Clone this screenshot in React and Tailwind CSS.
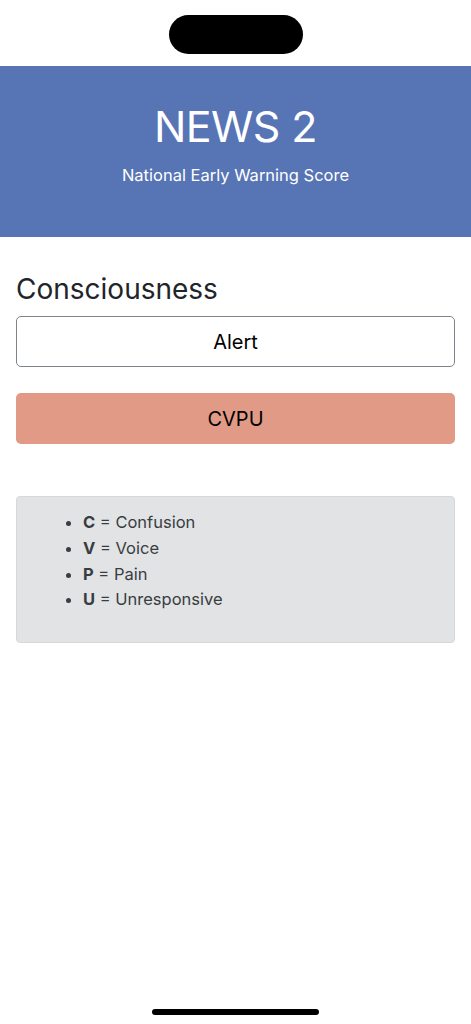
export default function App() {
  const items = [
    ['C', 'Confusion'],
    ['V', 'Voice'],
    ['P', 'Pain'],
    ['U', 'Unresponsive'],
  ];

  return (
    <div className="relative min-h-[1024px] bg-white font-['Inter',sans-serif] text-[#212529]">
      {/* status bar */}
      <div className="flex h-[66px] justify-center pt-[15px]">
        <div className="h-[39px] w-[134px] rounded-full bg-black" />
      </div>

      {/* header */}
      <div className="flex h-[171px] flex-col items-center bg-[#5774b5] pt-[34px] text-white">
        <h1 className="text-[43px] leading-[52px] font-normal tracking-[-0.6px]">NEWS 2</h1>
        <p className="mt-[11px] text-[16.5px] leading-[24px]">National Early Warning Score</p>
      </div>

      <div className="px-4 pt-[35px]">
        <h2 className="text-[28px] leading-[34px] font-normal">Consciousness</h2>

        <button className="mt-[10px] flex h-[51px] w-full items-center justify-center rounded-[5px] border border-[#7d848b] bg-white text-[20px] text-black">
          Alert
        </button>

        <button className="mt-[26px] flex h-[51px] w-full items-center justify-center rounded-[5px] bg-[#e09a85] text-[20px] text-black">
          CVPU
        </button>

        <div className="mt-[52px] h-[147px] rounded-[4px] border border-[#d6d8db] bg-[#e2e3e5] pt-[13px] text-[#383d41]">
          <ul className="list-disc pl-[66px] text-[16.5px] leading-[25.8px] marker:text-[#383d41]">
            {items.map(([k, v]) => (
              <li key={k}>
                <b className="font-bold">{k}</b> = {v}
              </li>
            ))}
          </ul>
        </div>
      </div>

      {/* home indicator */}
      <div className="absolute bottom-[9px] left-0 right-0 flex justify-center">
        <div className="h-[6px] w-[167px] rounded-full bg-black" />
      </div>
    </div>
  );
}
